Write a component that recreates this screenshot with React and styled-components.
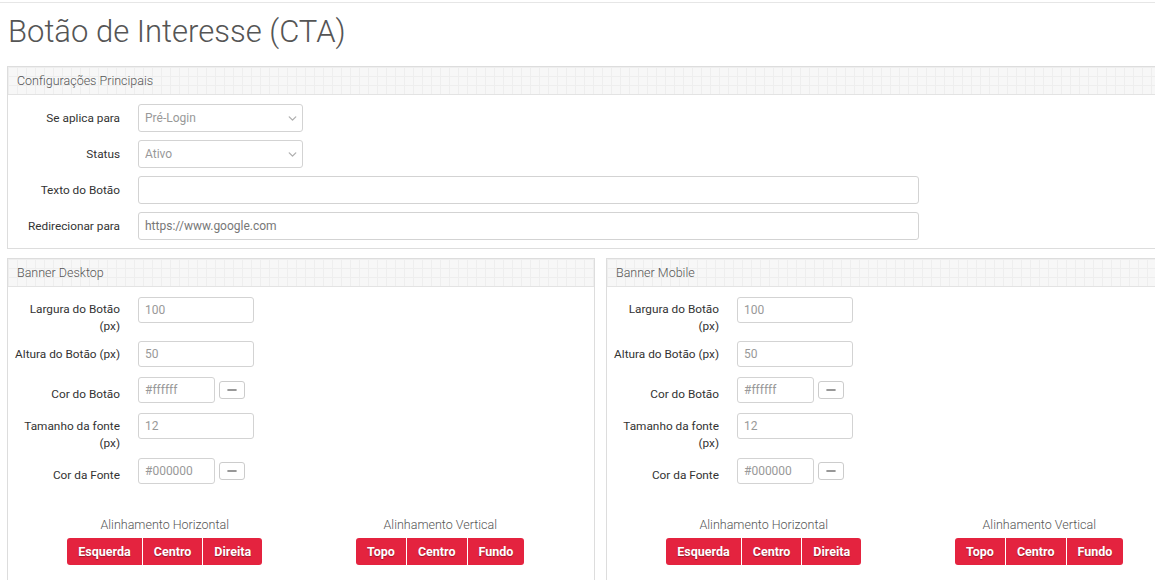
import React from 'react';
import styled, { createGlobalStyle } from 'styled-components';
import { ChevronDown, Minus } from 'lucide-react';

const GlobalStyle = createGlobalStyle`
  html, body {
    margin: 0;
    padding: 0;
    background: #fff;
    overflow: hidden;
  }
  body {
    font-family: Roboto, "Liberation Sans", Arial, sans-serif;
    color: #333;
  }
  * { box-sizing: border-box; }
`;

const Page = styled.div`
  margin-top: 2px;
  border-top: 1px solid #e6e6e6;
  width: 1200px;
  padding: 0 0 0 7px;
`;

const Title = styled.h1`
  margin: 11px 0 16px 1px;
  font-size: 31px;
  font-weight: 300;
  color: #555;
  line-height: 36px;
`;

const Panel = styled.div`
  border: 1px solid #ddd;
  background: #fff;
  width: ${p => p.$width || 'auto'};
`;

const PanelHeading = styled.div`
  height: 28px;
  padding: 0 9px;
  display: flex;
  align-items: center;
  font-size: 12.5px;
  font-weight: 300;
  color: #555;
  border-bottom: 1px solid #e3e3e3;
  background-color: #f7f7f7;
  background-image:
    linear-gradient(#eeeeee 1px, transparent 1px),
    linear-gradient(90deg, #eeeeee 1px, transparent 1px);
  background-size: 9px 9px;
`;

const PanelBody = styled.div`
  padding: ${p => p.$pad || '9px 0 8px'};
`;

const FormRow = styled.div`
  display: flex;
  align-items: ${p => (p.$top ? 'flex-start' : 'center')};
  margin-bottom: ${p => (p.$mb !== undefined ? p.$mb : 8)}px;
  &:last-child { margin-bottom: 0; }
`;

const Label = styled.label`
  width: 111px;
  margin-left: 1px;
  margin-right: 18px;
  flex-shrink: 0;
  text-align: right;
  font-size: 11.8px;
  line-height: 17px;
  color: #333;
  padding-top: ${p => p.$pt || 0}px;
`;

const SelectWrap = styled.div`
  position: relative;
  width: 165px;
  height: 28px;
`;

const Select = styled.select`
  appearance: none;
  -webkit-appearance: none;
  width: 100%;
  height: 100%;
  border: 1px solid #d3d3d3;
  border-radius: 3px;
  background: #fff;
  padding: 0 6px;
  font-family: Roboto, "Liberation Sans", Arial, sans-serif;
  font-size: 12px;
  color: #999;
  outline: none;
`;

const Chevron = styled(ChevronDown)`
  position: absolute;
  right: 4px;
  top: 8px;
  color: #b0b0b0;
  pointer-events: none;
`;

const TextInput = styled.input`
  width: ${p => p.$w}px;
  height: ${p => p.$h || 26}px;
  border: 1px solid #d3d3d3;
  border-radius: 3px;
  padding: 0 6px;
  font-family: Roboto, "Liberation Sans", Arial, sans-serif;
  font-size: 12px;
  color: ${p => p.$color || '#999'};
  background: #fff;
  outline: none;
`;

const ColorGroup = styled.div`
  display: flex;
  align-items: center;
  gap: 4px;
`;

const PickerButton = styled.button`
  width: 26px;
  height: 18px;
  border: 1px solid #ccc;
  border-radius: 3px;
  background: #fff;
  padding: 0;
  display: flex;
  align-items: center;
  justify-content: center;
  color: #777;
`;

const BannerRow = styled.div`
  display: flex;
  gap: 11px;
  margin-top: 9px;
`;

const AlignSection = styled.div`
  display: grid;
  grid-template-columns: 1fr 1fr;
  padding: 0 16px 0 19px;
  margin-top: 33px;
`;

const AlignBlock = styled.div`
  display: flex;
  flex-direction: column;
  align-items: center;
`;

const AlignTitle = styled.div`
  font-size: 12.5px;
  font-weight: 300;
  color: #555;
  line-height: 16px;
  margin-bottom: 5px;
`;

const ButtonGroup = styled.div`
  display: flex;
  border-radius: 3px;
  overflow: hidden;
`;

const RedButton = styled.button`
  height: 27px;
  padding: 0 11px;
  border: none;
  border-left: 1px solid #fff;
  background: #e4233f;
  color: #fff;
  font-family: Roboto, "Liberation Sans", Arial, sans-serif;
  font-size: 12.5px;
  font-weight: 700;
  text-shadow: 0 1px 1px rgba(0, 0, 0, 0.35);
  &:first-child { border-left: none; }
`;

function ColorField({ value }) {
  return (
    <ColorGroup>
      <TextInput $w={77} defaultValue={value} />
      <PickerButton>
        <Minus size={14} strokeWidth={2.5} />
      </PickerButton>
    </ColorGroup>
  );
}

function BannerPanel({ title }) {
  return (
    <Panel $width="588px">
      <PanelHeading>{title}</PanelHeading>
      <PanelBody $pad="10px 0 24px">
        <FormRow $top $mb={6}>
          <Label $pt={4}>Largura do Botão (px)</Label>
          <TextInput $w={116} defaultValue="100" />
        </FormRow>
        <FormRow $top $mb={10}>
          <Label $pt={5}>Altura do Botão (px)</Label>
          <TextInput $w={116} defaultValue="50" />
        </FormRow>
        <FormRow $top $mb={10}>
          <Label $pt={9}>Cor do Botão</Label>
          <ColorField value="#ffffff" />
        </FormRow>
        <FormRow $top $mb={6}>
          <Label $pt={5}>Tamanho da fonte (px)</Label>
          <TextInput $w={116} defaultValue="12" />
        </FormRow>
        <FormRow $top $mb={0}>
          <Label $pt={9}>Cor da Fonte</Label>
          <ColorField value="#000000" />
        </FormRow>
        <AlignSection>
          <AlignBlock>
            <AlignTitle>Alinhamento Horizontal</AlignTitle>
            <ButtonGroup>
              <RedButton>Esquerda</RedButton>
              <RedButton>Centro</RedButton>
              <RedButton>Direita</RedButton>
            </ButtonGroup>
          </AlignBlock>
          <AlignBlock>
            <AlignTitle>Alinhamento Vertical</AlignTitle>
            <ButtonGroup>
              <RedButton>Topo</RedButton>
              <RedButton>Centro</RedButton>
              <RedButton>Fundo</RedButton>
            </ButtonGroup>
          </AlignBlock>
        </AlignSection>
      </PanelBody>
    </Panel>
  );
}

export default function App() {
  return (
    <>
      <GlobalStyle />
      <Page>
        <Title>Botão de Interesse (CTA)</Title>
        <Panel>
          <PanelHeading>Configurações Principais</PanelHeading>
          <PanelBody>
            <FormRow>
              <Label>Se aplica para</Label>
              <SelectWrap>
                <Select defaultValue="pre">
                  <option value="pre">Pré-Login</option>
                  <option value="pos">Pós-Login</option>
                </Select>
                <Chevron size={13} strokeWidth={2.5} />
              </SelectWrap>
            </FormRow>
            <FormRow>
              <Label>Status</Label>
              <SelectWrap>
                <Select defaultValue="ativo">
                  <option value="ativo">Ativo</option>
                  <option value="inativo">Inativo</option>
                </Select>
                <Chevron size={13} strokeWidth={2.5} />
              </SelectWrap>
            </FormRow>
            <FormRow>
              <Label>Texto do Botão</Label>
              <TextInput $w={781} $h={28} />
            </FormRow>
            <FormRow>
              <Label>Redirecionar para</Label>
              <TextInput $w={781} $h={28} $color="#777" defaultValue="https://www.google.com" />
            </FormRow>
          </PanelBody>
        </Panel>
        <BannerRow>
          <BannerPanel title="Banner Desktop" />
          <BannerPanel title="Banner Mobile" />
        </BannerRow>
      </Page>
    </>
  );
}
